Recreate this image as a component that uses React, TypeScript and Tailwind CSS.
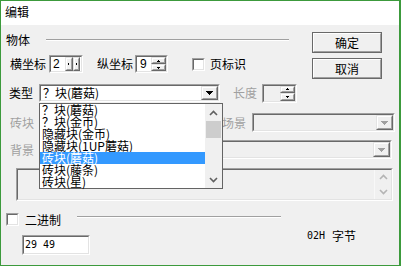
import React from "react";

const cjk = "font-['Noto_Sans_CJK_SC','Noto_Sans_CJK_JP',sans-serif]";

function Sunken({
  className = "",
  inner = "",
  children,
}: {
  className?: string;
  inner?: string;
  children?: React.ReactNode;
}) {
  return (
    <div className={"border border-t-[#a0a0a0] border-l-[#a0a0a0] border-r-white border-b-white " + className}>
      <div className={"h-full w-full border border-t-[#696969] border-l-[#696969] border-r-[#e3e3e3] border-b-[#e3e3e3] " + inner}>
        {children}
      </div>
    </div>
  );
}

function Raised({ className = "", children }: { className?: string; children?: React.ReactNode }) {
  return (
    <div className={"border border-t-[#e3e3e3] border-l-[#e3e3e3] border-r-[#696969] border-b-[#696969] bg-[#f0f0f0] " + className}>
      <div className="h-full w-full border border-t-white border-l-white border-r-[#a0a0a0] border-b-[#a0a0a0] flex items-center justify-center">
        {children}
      </div>
    </div>
  );
}

function TriDown({ color = "#000" }: { color?: string }) {
  return (
    <svg width="7" height="4" viewBox="0 0 7 4" shapeRendering="crispEdges">
      <path d="M0 0h7v1h-1v1h-1v1h-1v1h-1v-1h-1v-1h-1v-1h-1z" fill={color} />
    </svg>
  );
}

function TinyUp() {
  return (
    <svg width="3" height="2" viewBox="0 0 3 2" shapeRendering="crispEdges">
      <path d="M1 0h1v1h1v1h-3v-1h1z" fill="#000" />
    </svg>
  );
}
function TinyDown() {
  return (
    <svg width="3" height="2" viewBox="0 0 3 2" shapeRendering="crispEdges">
      <path d="M0 0h3v1h-1v1h-1v-1h-1z" fill="#000" />
    </svg>
  );
}

function Chev({ up, color }: { up?: boolean; color: string }) {
  return (
    <svg width="9" height="6" viewBox="0 0 9 6">
      <polyline
        points={up ? "1,5 4.5,1.5 8,5" : "1,1 4.5,4.5 8,1"}
        fill="none"
        stroke={color}
        strokeWidth="1.6"
      />
    </svg>
  );
}

function CheckBox() {
  return <Sunken className="w-[13px] h-[13px] shrink-0" inner="bg-white" />;
}

function PushButton({ label }: { label: string }) {
  return (
    <div className="w-[70px] h-[21px] border border-[#696969] bg-[#f0f0f0]">
      <div className="h-full w-full border border-t-white border-l-white border-r-[#a0a0a0] border-b-[#a0a0a0] flex items-center justify-center">
        {label}
      </div>
    </div>
  );
}

function VSpin({ disabled }: { disabled?: boolean }) {
  return (
    <div className="w-[15px] h-full flex flex-col">
      <Raised className="h-1/2 w-full">
        <TinyUp />
      </Raised>
      <Raised className="h-1/2 w-full">
        <TinyDown />
      </Raised>
      {disabled ? null : null}
    </div>
  );
}

function HSpin() {
  return (
    <div className="w-[15px] h-full flex">
      <Raised className="w-1/2 h-full">
        <div className="w-[1px] h-[2px] bg-black" />
      </Raised>
      <Raised className="w-1/2 h-full">
        <div className="w-[1px] h-[2px] bg-black" />
      </Raised>
    </div>
  );
}

const items = [
  "？块(蘑菇)",
  "？块(金币)",
  "隐藏块(金币)",
  "隐藏块(1UP蘑菇)",
  "砖块(蘑菇)",
  "砖块(藤条)",
  "砖块(星)",
];

export default function App() {
  return (
    <div
      className={
        "w-[401px] h-[266px] border border-[#3c9a3c] border-r-2 bg-[#f0f0f0] flex flex-col overflow-hidden text-[12px] leading-[12px] text-black " +
        cjk
      }
    >
      {/* title bar */}
      <div className="h-[24px] bg-white pl-[4px] pt-[5px] shrink-0">编辑</div>

      {/* body */}
      <div className="relative flex-1 flex flex-col">
        {/* top section */}
        <div className="h-[55px] flex shrink-0">
          <div className="w-[311px] flex flex-col">
            <div className="mt-[9px] ml-[5px] h-[12px] flex items-center">
              <span>物体</span>
              <div className="ml-[16px] w-[243px] h-[2px] border-t border-t-[#a0a0a0] border-b border-b-white" />
            </div>
            <div className="mt-[9px] ml-[9px] h-[18px] flex items-center">
              <span>横坐标</span>
              <Sunken className="ml-[3px] w-[34px] h-[18px]" inner="bg-white flex items-center pr-[1px]">
                <span className="flex-1 pl-[2px] font-['Liberation_Sans',sans-serif] text-[12px]">2</span>
                <HSpin />
              </Sunken>
              <span className="ml-[14px]">纵坐标</span>
              <Sunken className="ml-[2px] w-[33px] h-[18px]" inner="bg-white flex items-center">
                <span className="flex-1 pl-[3px] font-['Liberation_Sans',sans-serif] text-[12px]">9</span>
                <VSpin />
              </Sunken>
              <div className="ml-[24px]">
                <CheckBox />
              </div>
              <span className="ml-[5px]">页标识</span>
            </div>
          </div>
          <div className="flex flex-col gap-[5px] mt-[7px]">
            <PushButton label="确定" />
            <PushButton label="取消" />
          </div>
        </div>

        {/* 类型 row */}
        <div className="mt-[4px] ml-[8px] h-[18px] flex items-center shrink-0">
          <span>类型</span>
          <Sunken className="ml-[6px] w-[181px] h-[18px]" inner="bg-white flex items-center">
            <span className="flex-1 pl-[2px]">？块(蘑菇)</span>
            <Raised className="w-[17px] h-full">
              <TriDown />
            </Raised>
          </Sunken>
          <span className="ml-[13px] text-[#a0a0a0]">长度</span>
          <Sunken className="ml-[5px] w-[35px] h-[19px]" inner="bg-[#f0f0f0] flex justify-end">
            <VSpin disabled />
          </Sunken>
        </div>

        {/* 砖块 / 场景 row */}
        <div className="mt-[11px] ml-[9px] h-[19px] flex items-center shrink-0 text-[#a0a0a0]">
          <span>砖块</span>
          <Sunken className="ml-[5px] w-[176px] h-[19px]" inner="bg-[#f0f0f0]" />
          <span className="ml-[7px]">场景</span>
          <Sunken className="ml-[6px] w-[143px] h-[19px]" inner="bg-[#f0f0f0] flex justify-end">
            <Raised className="w-[17px] h-full">
              <TriDown color="#a0a0a0" />
            </Raised>
          </Sunken>
        </div>

        {/* 背景 row */}
        <div className="mt-[8px] ml-[9px] h-[19px] flex items-center shrink-0 text-[#a0a0a0]">
          <span>背景</span>
          <Sunken className="ml-[5px] w-[353px] h-[19px]" inner="bg-[#f0f0f0] flex justify-end">
            <Raised className="w-[17px] h-full">
              <TriDown color="#a0a0a0" />
            </Raised>
          </Sunken>
        </div>

        {/* text area */}
        <Sunken className="mt-[9px] ml-[15px] w-[377px] h-[33px] shrink-0" inner="bg-[#f0f0f0] flex justify-end">
          <div className="w-[17px] h-full flex flex-col items-center justify-around border-l border-l-[#f8f8f8]">
            <Chev up color="#b4b4b4" />
            <Chev color="#b4b4b4" />
          </div>
        </Sunken>

        {/* 二进制 row */}
        <div className="mt-[12px] ml-[5px] h-[13px] flex items-start shrink-0">
          <CheckBox />
          <span className="ml-[6px] mt-[1px]">二进制</span>
          <div className="ml-[16px] mt-[3px] w-[204px] h-[2px] border-t border-t-[#a0a0a0] border-b border-b-white" />
        </div>

        {/* input row */}
        <div className="mt-[4px] h-[25px] flex items-start shrink-0">
          <Sunken className="ml-[21px] mt-[5px] w-[68px] h-[20px]" inner="bg-white flex items-center">
            <span className="pl-[1px] font-['DejaVu_Sans_Mono',monospace] text-[10px] leading-[12px]">29 49</span>
          </Sunken>
          <span className="ml-[217px] font-['DejaVu_Sans_Mono',monospace] text-[10px] leading-[12px]">02H</span>
          <span className="ml-[7px]">字节</span>
        </div>

        {/* dropdown list overlay */}
        <div className="absolute left-[38px] top-[78px] w-[184px] h-[86px] border border-[#646464] bg-white flex">
          <div className="flex-1 flex flex-col">
            {items.map((t, i) => (
              <div
                key={t}
                className={
                  i === 4
                    ? "h-[12px] leading-[12px] pl-[2px] bg-[#3399ff] text-white"
                    : "h-[12px] leading-[12px] pl-[2px]"
                }
              >
                {t}
              </div>
            ))}
          </div>
          <div className="w-[17px] bg-[#f0f0f0] flex flex-col items-center">
            <div className="h-[17px] w-full flex items-center justify-center">
              <Chev up color="#606060" />
            </div>
            <div className="w-[15px] h-[17px] bg-[#cdcdcd]" />
            <div className="flex-1" />
            <div className="h-[17px] w-full flex items-center justify-center">
              <Chev color="#606060" />
            </div>
          </div>
        </div>
      </div>
    </div>
  );
}
